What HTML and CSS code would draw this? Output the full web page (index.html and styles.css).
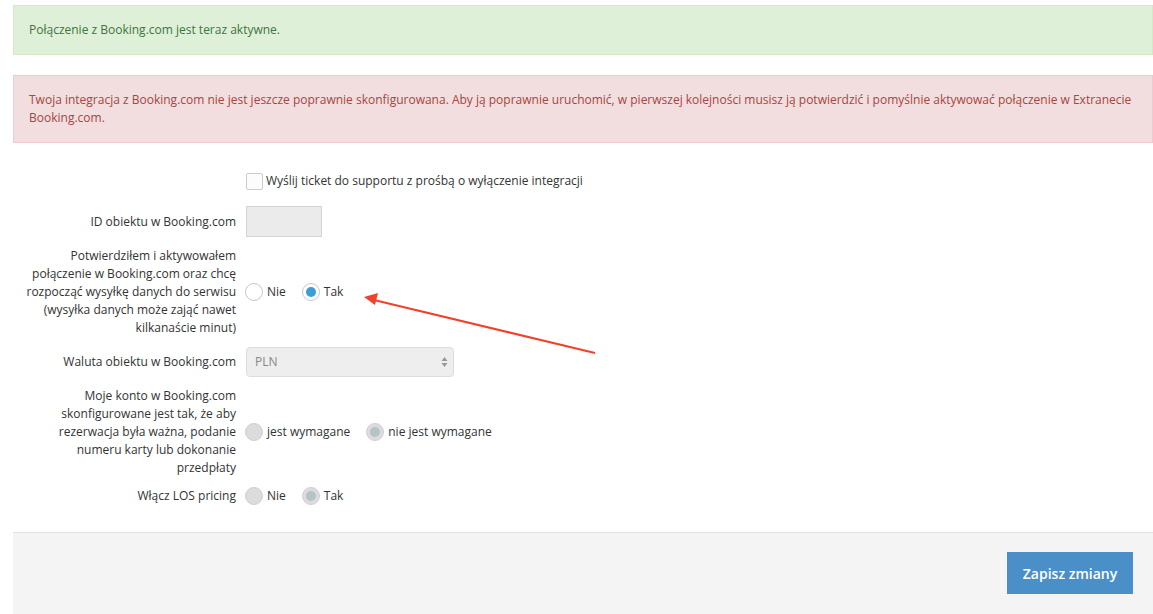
FILE: index.html
```html
<!DOCTYPE html>
<html lang="pl">
<head>
    <meta charset="UTF-8">
    <title>Booking.com</title>
    <link rel="stylesheet" href="styles.css">
</head>
<body>
<div class="page">
    <div class="alert alert-success">Połączenie z Booking.com jest teraz aktywne.</div>
    <div class="alert alert-danger">Twoja integracja z Booking.com nie jest jeszcze poprawnie skonfigurowana. Aby ją poprawnie uruchomić, w pierwszej kolejności musisz ją potwierdzić i pomyślnie aktywować połączenie w Extranecie Booking.com.</div>

    <form class="form">
        <div class="row">
            <div class="label"></div>
            <div class="field">
                <label class="check"><span class="box"></span>Wyślij ticket do supportu z prośbą o wyłączenie integracji</label>
            </div>
        </div>
        <div class="row">
            <div class="label">ID obiektu w Booking.com</div>
            <div class="field"><span class="input"></span></div>
        </div>
        <div class="row">
            <div class="label">Potwierdziłem i aktywowałem<br>połączenie w Booking.com oraz chcę<br>rozpocząć wysyłkę danych do serwisu<br>(wysyłka danych może zająć nawet<br>kilkanaście minut)</div>
            <div class="field">
                <label class="radio"><span class="dot"></span>Nie</label>
                <label class="radio"><span class="dot checked"></span>Tak</label>
            </div>
        </div>
        <div class="row">
            <div class="label">Waluta obiektu w Booking.com</div>
            <div class="field">
                <div class="select">PLN
                    <svg class="caret" width="7" height="12" viewBox="0 0 7 12"><path d="M3.5 1 L6.5 5 L0.5 5 Z M3.5 11 L6.5 7 L0.5 7 Z" fill="#999"/></svg>
                </div>
            </div>
        </div>
        <div class="row">
            <div class="label">Moje konto w Booking.com<br>skonfigurowane jest tak, że aby<br>rezerwacja była ważna, podanie<br>numeru karty lub dokonanie<br>przedpłaty</div>
            <div class="field">
                <label class="radio"><span class="dot off"></span>jest wymagane</label>
                <label class="radio"><span class="dot off checked"></span>nie jest wymagane</label>
            </div>
        </div>
        <div class="row row-last">
            <div class="label">Włącz LOS pricing</div>
            <div class="field">
                <label class="radio"><span class="dot off"></span>Nie</label>
                <label class="radio"><span class="dot off checked"></span>Tak</label>
            </div>
        </div>
    </form>

    <div class="footer">
        <button class="btn" type="button">Zapisz zmiany</button>
    </div>
</div>

<svg class="arrow" width="1153" height="614" viewBox="0 0 1153 614">
    <line x1="595" y1="353" x2="374" y2="300" stroke="#f0412b" stroke-width="2"/>
    <path d="M364 297 L378 293 L375 305 Z" fill="#f0412b"/>
</svg>
</body>
</html>
```

FILE: styles.css
```css
* {
    box-sizing: border-box;
}

body {
    margin: 0;
    font-family: "Open Sans", "Liberation Sans", sans-serif;
    font-size: 12px;
    line-height: 18px;
    color: #333;
    background: #fff;
}

.page {
    padding: 5px 0 0 13px;
}

.alert {
    padding: 15px 15px;
    border: 1px solid;
    margin-bottom: 20px;
}

.alert-success {
    background: #dff0d8;
    border-color: #d6e9c6;
    color: #3c763d;
}

.alert-danger {
    background: #f2dede;
    border-color: #ebccd1;
    color: #a94442;
}

.form {
    padding-top: 3px;
    padding-bottom: 27px;
}

.row {
    display: flex;
    align-items: center;
    min-height: 30px;
    margin-bottom: 10px;
}

.row-last {
    min-height: 0;
    margin-bottom: 0;
}

.label {
    width: 214px;
    margin-left: 9px;
    margin-right: 9px;
    text-align: right;
    white-space: nowrap;
}

.field {
    display: flex;
    align-items: center;
}

.check {
    display: flex;
    align-items: center;
}

.box {
    width: 17px;
    height: 17px;
    border: 1px solid #ccc;
    border-radius: 2px;
    background: #fcfcfc;
    margin-left: 1px;
    margin-right: 3px;
}

.input {
    display: block;
    width: 76px;
    height: 31px;
    margin-left: 1px;
    background: #ebebeb;
    border: 1px solid #d4d4d4;
}

.radio {
    display: flex;
    align-items: center;
    margin-right: 16px;
}

.dot {
    position: relative;
    width: 18px;
    height: 18px;
    border: 1px solid #c8c8c8;
    border-radius: 50%;
    background: #fff;
    margin-right: 4px;
}

.dot.checked::after {
    content: "";
    position: absolute;
    left: 3px;
    top: 3px;
    width: 10px;
    height: 10px;
    border-radius: 50%;
    background: #3b9fd6;
}

.dot.off {
    background: #dcdcdc;
    border-color: #cfcfcf;
}

.dot.off.checked::after {
    background: #b5c3c7;
}

.select {
    position: relative;
    width: 208px;
    height: 30px;
    margin-left: 1px;
    padding: 5px 8px;
    background: #eee;
    border: 1px solid #ddd;
    border-radius: 4px;
    color: #888;
}

.caret {
    position: absolute;
    right: 5px;
    top: 8px;
}

.footer {
    display: flex;
    justify-content: flex-end;
    height: 82px;
    padding: 19px 20px 0 0;
    background: #f4f4f4;
    border-top: 1px solid #e2e2e2;
}

.btn {
    width: 126px;
    height: 42px;
    border: 0;
    background: #4a8fc8;
    color: #fff;
    font-family: "Open Sans", "Liberation Sans", sans-serif;
    font-size: 14px;
    font-weight: 600;
}

.arrow {
    position: absolute;
    left: 0;
    top: 0;
    pointer-events: none;
}
```
